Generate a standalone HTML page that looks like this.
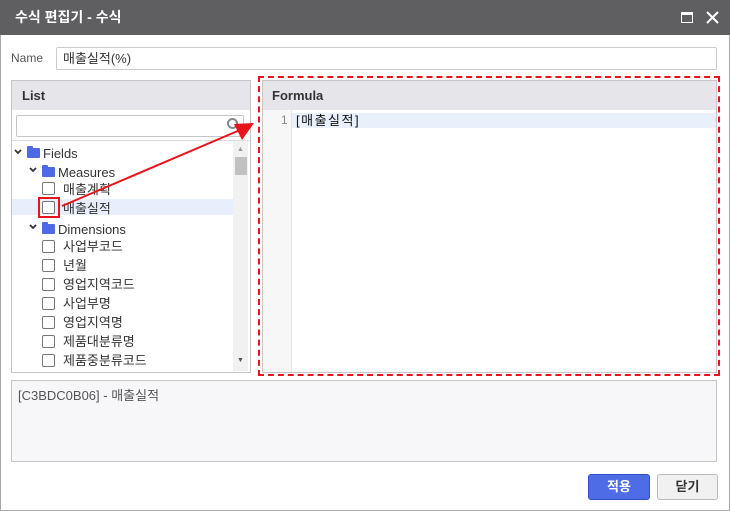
<!DOCTYPE html>
<html><head><meta charset="utf-8">
<style>
*{box-sizing:border-box;margin:0;padding:0}
body{width:730px;height:511px;overflow:hidden;background:#fff;font-family:"Liberation Sans","Noto Sans CJK KR",sans-serif;position:relative}
.a{position:absolute}
.win{left:0;top:0;width:730px;height:511px;border:1px solid #a9a9a9}
.title{left:0;top:0;width:730px;height:35px;background:#5f5f62;color:#fff;font-size:14px;font-weight:bold;line-height:35px;padding-left:15px}
.t{font-size:13px;color:#333;white-space:nowrap;line-height:15px}
.tr .t{margin-top:1px}
.cb{width:13px;height:13px;border:1px solid #777;border-radius:2px;background:#fff}
.fold{width:13px;height:10px;background:#4d6ae6;border-radius:1px}
.fold:before{content:"";position:absolute;left:0;top:-2px;width:6px;height:3px;background:#4d6ae6;border-radius:1px 1px 0 0}
</style></head><body>
<div class="a win"></div>
<div class="a title">수식 편집기 - 수식</div>
<div class="a" style="left:681px;top:12px;width:12px;height:11px;border:1.5px solid #fff;border-top-width:3px"></div>
<svg class="a" style="left:706px;top:11px" width="13" height="13"><path d="M1 1L12 12M12 1L1 12" stroke="#fff" stroke-width="2"/></svg>

<div class="a t" style="left:11px;top:51px;color:#555;font-size:12px">Name</div>
<div class="a" style="left:56px;top:47px;width:661px;height:23px;border:1px solid #ccc;border-radius:2px"></div>
<div class="a t" style="left:63px;top:51px">매출실적(%)</div>

<div class="a" style="left:11px;top:80px;width:240px;height:293px;border:1px solid #c6c6c6"></div>
<div class="a" style="left:12px;top:81px;width:238px;height:29px;background:#e6e6ea"></div>
<div class="a" style="left:22px;top:88px;font-size:13px;font-weight:bold;color:#333">List</div>
<div class="a" style="left:16px;top:115px;width:228px;height:22px;border:1px solid #c6c6c6;border-radius:2px"></div>
<div class="a" style="left:227px;top:118px;width:11px;height:11px;border:2px solid #888;border-radius:50%"></div>
<div class="a" style="left:12px;top:140px;width:238px;height:1px;background:#ddd"></div>
<div class="a" style="left:233px;top:141px;width:15px;height:230px;background:#f1f1f1"></div>
<div class="a" style="left:235px;top:157px;width:12px;height:18px;background:#c1c1c1"></div>
<div class="a" style="left:237px;top:146px;font-size:7px;color:#999">▲</div>
<div class="a" style="left:237px;top:357px;font-size:7px;color:#555">▼</div>
<div class="a" style="left:12px;top:199px;width:221px;height:16px;background:#e8eefb"></div>

<svg class="a" style="left:0;top:0" width="60" height="240">
<path d="M15 150L18 153L21 150M30 168L33 171L36 168M30 225L33 228L36 225" stroke="#333" stroke-width="1.8" fill="none"/>
</svg>
<div class="tr">
<div class="a fold" style="left:27px;top:148px"></div>
<div class="a t" style="left:43px;top:145px">Fields</div>
<div class="a fold" style="left:42px;top:167px"></div>
<div class="a t" style="left:58px;top:164px">Measures</div>
<div class="a cb" style="left:42px;top:182px"></div><div class="a t" style="left:63px;top:181px">매출계획</div>
<div class="a cb" style="left:42px;top:201px"></div><div class="a t" style="left:63px;top:200px">매출실적</div>
<div class="a fold" style="left:42px;top:224px"></div>
<div class="a t" style="left:58px;top:221px">Dimensions</div>
<div class="a cb" style="left:42px;top:240px"></div><div class="a t" style="left:63px;top:238px">사업부코드</div>
<div class="a cb" style="left:42px;top:259px"></div><div class="a t" style="left:63px;top:257px">년월</div>
<div class="a cb" style="left:42px;top:278px"></div><div class="a t" style="left:63px;top:276px">영업지역코드</div>
<div class="a cb" style="left:42px;top:297px"></div><div class="a t" style="left:63px;top:295px">사업부명</div>
<div class="a cb" style="left:42px;top:316px"></div><div class="a t" style="left:63px;top:314px">영업지역명</div>
<div class="a cb" style="left:42px;top:335px"></div><div class="a t" style="left:63px;top:333px">제품대분류명</div>
<div class="a cb" style="left:42px;top:354px"></div><div class="a t" style="left:63px;top:352px">제품중분류코드</div>
</div>
<div class="a" style="left:38px;top:197px;width:22px;height:21px;border:2px solid #e8141b"></div>

<div class="a" style="left:262px;top:80px;width:455px;height:293px;border:1px solid #c6c6c6"></div>
<div class="a" style="left:263px;top:81px;width:453px;height:29px;background:#e6e6ea"></div>
<div class="a" style="left:272px;top:88px;font-size:13px;font-weight:bold;color:#333">Formula</div>
<div class="a" style="left:263px;top:110px;width:29px;height:262px;background:#f7f7f7;border-right:1px solid #e4e4e4"></div>
<div class="a" style="left:292px;top:113px;width:424px;height:15px;background:#e8f0fb"></div>
<div class="a t" style="left:281px;top:113px;color:#888;font-size:12px">1</div>
<div class="a t" style="left:296px;top:113px;color:#111;letter-spacing:1.5px">[매출실적]</div>
<div class="a" style="left:258px;top:76px;width:462px;height:300px;border:2px dashed #e8141b"></div>

<svg class="a" style="left:0;top:0" width="730" height="511">
<line x1="62" y1="206" x2="240" y2="130" stroke="#e8141b" stroke-width="2"/>
<polygon points="254,123 234,124 242,140" fill="#e8141b"/>
</svg>

<div class="a" style="left:11px;top:380px;width:706px;height:82px;background:#f7f7f9;border:1px solid #c6c6c6"></div>
<div class="a t" style="left:18px;top:388px;color:#555">[C3BDC0B06] - 매출실적</div>

<div class="a" style="left:588px;top:474px;width:62px;height:26px;background:#4d6ce6;border:1px solid #2f4fc7;border-radius:3px;color:#fff;font-size:13px;font-weight:bold;text-align:center;line-height:24px">적용</div>
<div class="a" style="left:657px;top:474px;width:61px;height:26px;background:#f1f1f1;border:1px solid #bbb;border-radius:3px;color:#333;font-size:13px;font-weight:bold;text-align:center;line-height:24px">닫기</div>
</body></html>
